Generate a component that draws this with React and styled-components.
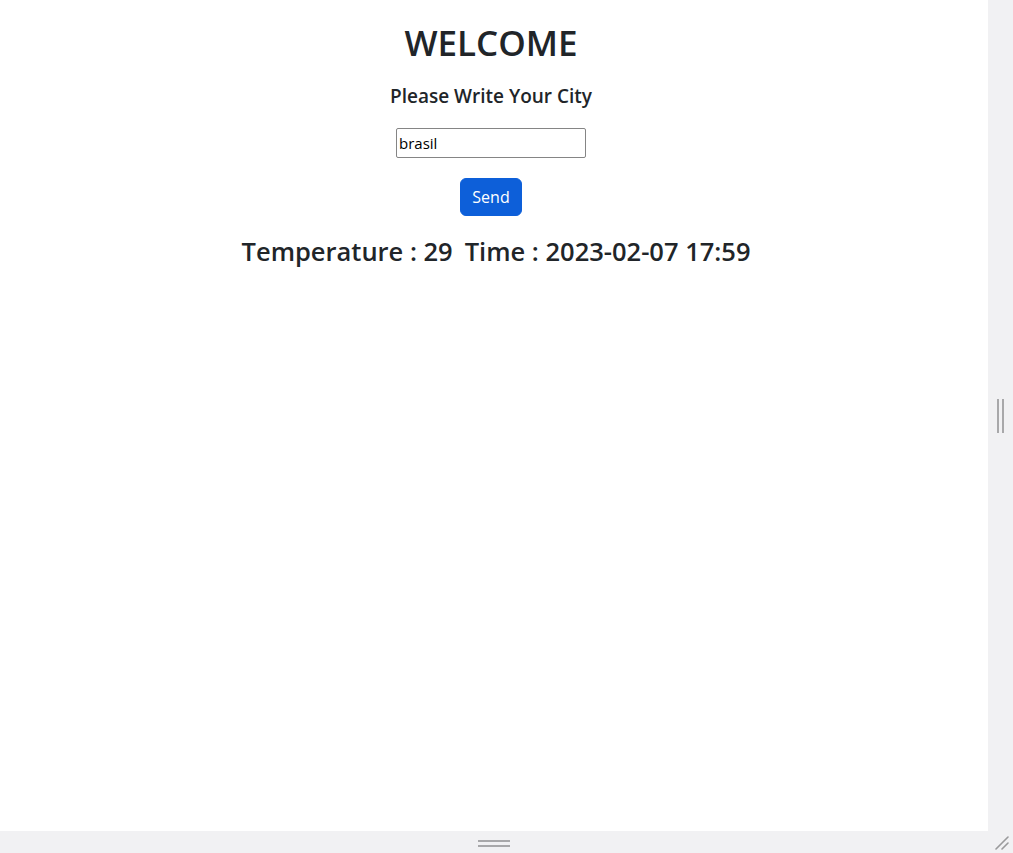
import React, { useState } from 'react';
import styled, { createGlobalStyle } from 'styled-components';

const GlobalStyle = createGlobalStyle`
  html, body {
    margin: 0;
    padding: 0;
    background: #ffffff;
  }
  body {
    font-family: "Open Sans", "Noto Sans", sans-serif;
    color: #212529;
  }
`;

const Frame = styled.div`
  display: grid;
  grid-template-columns: 988px 25px;
  grid-template-rows: 831px 22px;
  width: 1013px;
  height: 853px;
  overflow: hidden;
`;

const Viewport = styled.main`
  background: #ffffff;
  display: flex;
  flex-direction: column;
  align-items: center;
  text-align: center;
  padding: 22px 6px 0 0;
`;

const SideBar = styled.div`
  background: #f1f1f3;
  display: flex;
  align-items: center;
  justify-content: center;
`;

const BottomBar = styled.div`
  background: #f1f1f3;
  display: flex;
  align-items: center;
  justify-content: center;
`;

const Corner = styled.div`
  background: #f1f1f3;
  display: flex;
  align-items: flex-end;
  justify-content: flex-end;
  padding: 0 4px 3px 0;
`;

const VGrip = styled.div`
  display: flex;
  gap: 3px;

  span {
    width: 2px;
    height: 34px;
    background: #a8a8aa;
  }
`;

const HGrip = styled.div`
  display: flex;
  flex-direction: column;
  gap: 3px;
  margin-top: 2px;

  span {
    width: 32px;
    height: 2px;
    background: #a8a8aa;
  }
`;

const Title = styled.h1`
  margin: 0 0 21px;
  font-size: 35px;
  font-weight: 600;
  line-height: 1.2;
`;

const Subtitle = styled.h5`
  margin: 0 0 20px;
  font-size: 19px;
  font-weight: 600;
  line-height: 1.2;
`;

const CityInput = styled.input`
  box-sizing: border-box;
  width: 190px;
  height: 30px;
  padding: 1px 2px;
  border: 1px solid #858585;
  border-radius: 2px;
  font-family: "Open Sans", sans-serif;
  font-size: 15px;
  color: #000;
  outline: none;
`;

const SendButton = styled.button`
  margin-top: 20px;
  width: 62px;
  height: 38px;
  border: 1px solid #0d5fd9;
  border-radius: 6px;
  background: #0d5fd9;
  color: #ffffff;
  font-family: "Open Sans", sans-serif;
  font-size: 16px;
  font-weight: 400;
  cursor: pointer;
`;

const Result = styled.h3`
  margin: 20px 0 0 10px;
  display: flex;
  gap: 12px;
  font-size: 25.5px;
  font-weight: 600;
  line-height: 1.2;
`;

export default function App() {
  const [city, setCity] = useState('brasil');

  return (
    <>
      <GlobalStyle />
      <Frame>
        <Viewport>
          <Title>WELCOME</Title>
          <Subtitle>Please Write Your City</Subtitle>
          <CityInput value={city} onChange={(e) => setCity(e.target.value)} />
          <SendButton type="button">Send</SendButton>
          <Result>
            <span>Temperature : 29</span>
            <span>Time : 2023-02-07 17:59</span>
          </Result>
        </Viewport>
        <SideBar>
          <VGrip>
            <span />
            <span />
          </VGrip>
        </SideBar>
        <BottomBar>
          <HGrip>
            <span />
            <span />
          </HGrip>
        </BottomBar>
        <Corner>
          <svg width="16" height="16" viewBox="0 0 16 16">
            <path d="M3 15 L15 3 M9 15 L15 9" stroke="#9a9a9c" strokeWidth="1.6" strokeLinecap="round" />
          </svg>
        </Corner>
      </Frame>
    </>
  );
}
